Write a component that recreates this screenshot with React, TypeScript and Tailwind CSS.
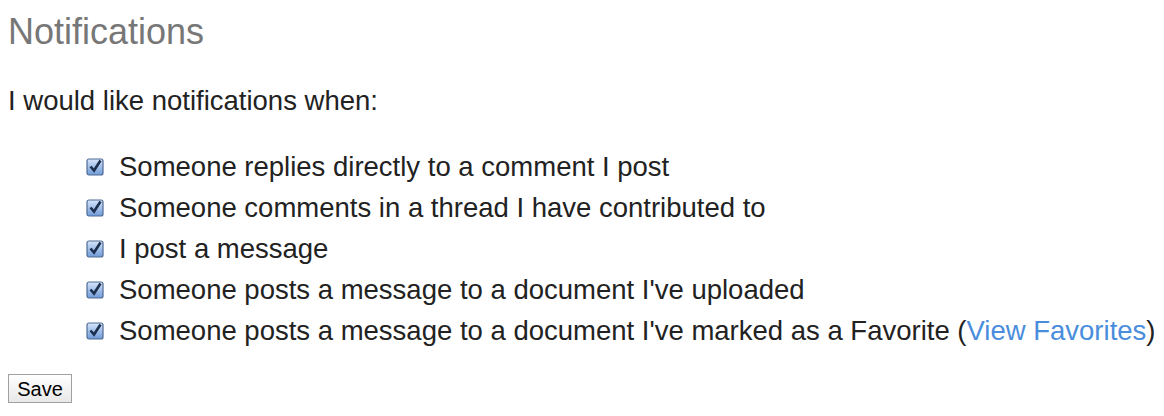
import React from 'react';

const items = [
  'Someone replies directly to a comment I post',
  'Someone comments in a thread I have contributed to',
  'I post a message',
  "Someone posts a message to a document I've uploaded",
];

const CheckIcon = () => (
  <svg width="18" height="18" viewBox="0 0 18 18" className="shrink-0">
    <defs>
      <linearGradient id="cb" x1="0" y1="0" x2="0" y2="1">
        <stop offset="0" stopColor="#d6e5fa" />
        <stop offset="1" stopColor="#6f9ad8" />
      </linearGradient>
    </defs>
    <rect x="1" y="1" width="16" height="16" rx="2" fill="url(#cb)" stroke="#4f6a94" strokeWidth="1.2" />
    <path d="M4.5 8.5 L8 12.5 L14.5 2.5" fill="none" stroke="#1c2f4d" strokeWidth="2.6" strokeLinejoin="miter" />
  </svg>
);

const Row = ({ children }: { children: React.ReactNode }) => (
  <li className="flex items-center gap-[15px] h-[41px]">
    <CheckIcon />
    <span>{children}</span>
  </li>
);

export default function App() {
  return (
    <div className="w-[1164px] h-[416px] bg-white px-2 pt-[11px] text-[#222] overflow-hidden" style={{ fontFamily: '"Liberation Sans", Arial, sans-serif' }}>
      <h1 className="text-[36px] leading-[42px] text-[#777]">Notifications</h1>
      <p className="text-[27.5px] leading-[32px] mt-[32px]">I would like notifications when:</p>
      <ul className="pl-[78px] text-[27.5px] mt-[29px]">
        {items.map((t) => (
          <Row key={t}>{t}</Row>
        ))}
        <Row>
          Someone posts a message to a document I've marked as a Favorite (
          <a href="#" className="text-[#4a8ddc]">View Favorites</a>)
        </Row>
      </ul>
      <button className="mt-[23px] h-[29px] w-[64px] border border-[#a0a0a0] bg-gradient-to-b from-white to-[#e8e8e8] text-[20px] leading-none text-black">
        Save
      </button>
    </div>
  );
}
